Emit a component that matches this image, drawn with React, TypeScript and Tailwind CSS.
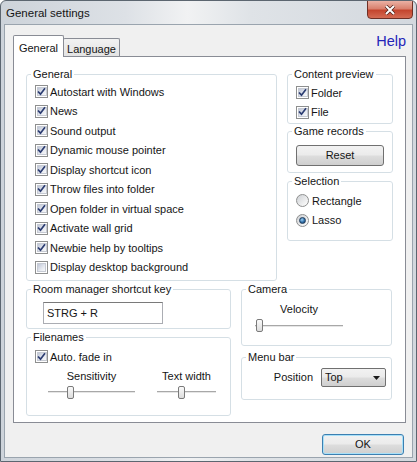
import React from "react"

const font = { fontFamily: "'Liberation Sans', Arial, sans-serif" }

function CheckBox({ checked }: { checked?: boolean }) {
  return (
    <span className="w-[13px] h-[13px] shrink-0 border border-[#8e8f8f] bg-white p-[1px] flex">
      <span className="flex-1 flex items-center justify-center bg-[linear-gradient(135deg,#bfc6d6_0%,#e6e9f0_60%,#f7f8fa_100%)] border border-[#c6cad3]">
        {checked && (
          <svg width="9" height="9" viewBox="0 0 9 9" className="-ml-[1px] -mt-[1px]">
            <path d="M1 4.5 L3.5 7.2 L8 1.2" stroke="#2c3d72" strokeWidth="1.7" fill="none" />
          </svg>
        )}
      </span>
    </span>
  )
}

function Radio({ checked }: { checked?: boolean }) {
  return (
    <span className="w-[13px] h-[13px] shrink-0 rounded-full border border-[#8e8f8f] bg-[linear-gradient(135deg,#cdd0d4_0%,#f6f6f6_80%)] flex items-center justify-center">
      {checked && (
        <span className="w-[7px] h-[7px] rounded-full bg-[radial-gradient(circle_at_40%_35%,#9fd0f5_0%,#2f6fa8_55%,#173d63_100%)] border border-[#1f3b5a]" />
      )}
    </span>
  )
}

function CheckRow({ label, checked = true }: { label: string; checked?: boolean }) {
  return (
    <div className="h-[19.5px] flex items-center gap-[2px]">
      <CheckBox checked={checked} />
      <span>{label}</span>
    </div>
  )
}

function RadioRow({ label, checked }: { label: string; checked?: boolean }) {
  return (
    <div className="h-[19.5px] flex items-center gap-[3px]">
      <Radio checked={checked} />
      <span>{label}</span>
    </div>
  )
}

// group box: border runs through the middle of the legend
function Group({
  title,
  className,
  inner = "",
  children,
}: {
  title: string
  className: string
  inner?: string
  children?: React.ReactNode
}) {
  return (
    <fieldset className={`border border-[#d5dfe5] rounded-[3px] ${className}`}>
      <legend className="ml-[4px] px-[2px] leading-[15px]">{title}</legend>
      <div className={inner}>{children}</div>
    </fieldset>
  )
}

function Slider({ width, thumb }: { width: number; thumb: number }) {
  return (
    <div className="relative h-[14px] flex items-center" style={{ width }}>
      <div className="w-full h-[3px] bg-[#e6e6e6] border-t border-[#a8a8a8] border-b border-b-white" />
      <div
        className="absolute top-0 w-[7px] h-[13px] rounded-[2px] border border-[#7a7a7a] bg-[linear-gradient(to_bottom,#fafafa,#dcdcdc)]"
        style={{ left: thumb }}
      />
    </div>
  )
}

function Button({ label, className }: { label: string; className: string }) {
  return (
    <div
      className={`flex items-center justify-center rounded-[3px] border bg-[linear-gradient(to_bottom,#f2f2f2_0%,#ebebeb_48%,#dddddd_52%,#cfcfcf_100%)] ${className}`}
    >
      {label}
    </div>
  )
}

export default function App() {
  return (
    <div
      className="w-[417px] h-[462px] flex flex-col text-[11px] text-[#151515] border border-[#5c6670] rounded-t-[6px] bg-[linear-gradient(to_right,#cdd3da_0%,#dde1e6_30%,#f1f2f3_45%,#dfe3e7_60%,#d3d8de_100%)] overflow-hidden"
      style={font}
    >
      {/* title bar */}
      <div className="h-[23px] flex items-start justify-between pl-[5px] shrink-0">
        <span className="mt-[4px] text-[11.5px]">General settings</span>
        <div className="w-[46px] h-[19px] mr-[3px] -mt-[1px] rounded-b-[4px] border border-[#6e2f25] bg-[linear-gradient(to_bottom,#ebb1a4_0%,#d9816e_45%,#c4452e_55%,#d46b53_100%)] flex items-center justify-center">
          <svg width="12" height="10" viewBox="0 0 12 10">
            <path d="M2 1 L10 9 M10 1 L2 9" stroke="#4a1f18" strokeWidth="3.4" />
            <path d="M2 1 L10 9 M10 1 L2 9" stroke="#ffffff" strokeWidth="2" />
          </svg>
        </div>
      </div>

      {/* client area */}
      <div className="flex-1 mx-[3px] mb-[3px] bg-[#f0f0f0] border border-[#9aa4ae] flex flex-col pl-[8px] pr-[6px] pt-[10px]">
        <div className="h-[21px] flex items-end justify-between">
          <div className="flex items-end">
            <div className="relative z-10 h-[22px] -mb-[1px] w-[51px] bg-white border border-b-0 border-[#898c95] rounded-t-[2px] flex items-start justify-center pt-[4px]">
              General
            </div>
            <div className="h-[18px] w-[57px] -ml-[1px] border border-b-0 border-[#898c95] rounded-t-[2px] bg-[linear-gradient(to_bottom,#f2f2f2,#e3e3e3)] flex items-start justify-center pt-[2px]">
              Language
            </div>
          </div>
          <span className="self-start -mt-[3px] text-[14.5px] text-[#2424b8] leading-[18px]">Help</span>
        </div>

        {/* tab panel */}
        <div className="h-[367px] border border-[#898c95] bg-white pl-[12px] pt-[10px]">
          <div className="flex gap-[10px]">
            <Group title="General" className="w-[251px] h-[214px]" inner="pl-[8px]">
              <CheckRow label="Autostart with Windows" />
              <CheckRow label="News" />
              <CheckRow label="Sound output" />
              <CheckRow label="Dynamic mouse pointer" />
              <CheckRow label="Display shortcut icon" />
              <CheckRow label="Throw files into folder" />
              <CheckRow label="Open folder in virtual space" />
              <CheckRow label="Activate wall grid" />
              <CheckRow label="Newbie help by tooltips" />
              <CheckRow label="Display desktop background" checked={false} />
            </Group>
            <div className="w-[106px] flex flex-col">
              <Group title="Content preview" className="h-[57px]" inner="pl-[8px] pt-[1px]">
                <CheckRow label="Folder" />
                <CheckRow label="File" />
              </Group>
              <Group title="Game records" className="h-[49px]" inner="pl-[8px] pt-[6px]">
                <Button label="Reset" className="w-[88px] h-[21px] border-[#707070]" />
              </Group>
              <Group title="Selection" className="mt-[1px] h-[67px]" inner="pl-[8px] pt-[2px]">
                <RadioRow label="Rectangle" />
                <RadioRow label="Lasso" checked />
              </Group>
            </div>
          </div>

          <div className="mt-[1px] flex gap-[10px]">
            <div className="w-[205px] flex flex-col gap-[1px]">
              <Group title="Room manager shortcut key" className="h-[47px]" inner="pl-[16px] pt-[5px]">
                <div className="w-[120px] h-[22px] border border-[#abadb3] border-t-[#7a7a7a] flex items-center pl-[3px]">
                  STRG + R
                </div>
              </Group>
              <Group title="Filenames" className="h-[86px]" inner="pl-[8px] pt-[2px]">
                <CheckRow label="Auto. fade in" />
                <div className="flex gap-[22px] ml-[13px]">
                  <div className="w-[87px] flex flex-col items-center">
                    <span className="h-[19px] flex items-center">Sensitivity</span>
                    <Slider width={87} thumb={19} />
                  </div>
                  <div className="w-[59px] flex flex-col items-center">
                    <span className="h-[19px] flex items-center">Text width</span>
                    <Slider width={59} thumb={21} />
                  </div>
                </div>
              </Group>
            </div>
            <div className="w-[151px] flex flex-col gap-[4px]">
              <Group title="Camera" className="h-[64px]" inner="pl-[13px] pt-[3px]">
                <div className="w-[88px] flex flex-col items-center">
                  <span className="h-[19px] flex items-center">Velocity</span>
                  <Slider width={88} thumb={1} />
                </div>
              </Group>
              <Group title="Menu bar" className="h-[50px]" inner="pt-[3px] pr-[5px] flex items-center justify-end gap-[8px]">
                <span>Position</span>
                <div className="w-[65px] h-[19px] border border-[#707070] rounded-[2px] bg-[linear-gradient(to_bottom,#f2f2f2_0%,#ebebeb_48%,#dddddd_52%,#cfcfcf_100%)] flex items-center justify-between pl-[3px] pr-[5px]">
                  <span>Top</span>
                  <svg width="7" height="4" viewBox="0 0 7 4">
                    <path d="M0 0 H7 L3.5 4 Z" fill="#1a1a1a" />
                  </svg>
                </div>
              </Group>
            </div>
          </div>
        </div>

        <div className="flex justify-end pr-[2px] mt-[11px]">
          <Button
            label="OK"
            className="w-[82px] h-[21px] border-[#3c7fb1] shadow-[inset_0_0_0_1px_#a8e0f8]"
          />
        </div>
      </div>
    </div>
  )
}
